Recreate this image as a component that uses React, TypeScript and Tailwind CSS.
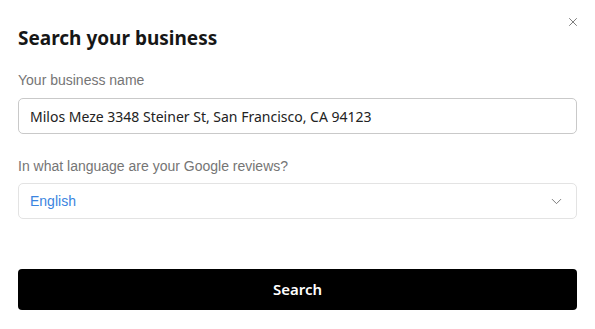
import { ChevronDown, X } from "lucide-react";

export default function App() {
  return (
    <div className="relative h-[329px] w-[595px] bg-white px-[18px] font-['Noto_Sans',sans-serif]">
      <button className="absolute right-[15px] top-[15px] text-[#555]" aria-label="Close">
        <X size={14} strokeWidth={1.3} />
      </button>
      <h1 className="pt-[24px] text-[19px] font-bold leading-[28px] text-[#161616]">Search your business</h1>
      <p className="mt-[20px] font-['Liberation_Sans',Arial,sans-serif] text-[14px] leading-[16px] text-[#757575]">
        Your business name
      </p>
      <div className="mt-[10px] flex h-[36px] items-center rounded-[5px] border border-[#c9c9c9] px-[11px] text-[14px] text-[#222]">
        Milos Meze 3348 Steiner St, San Francisco, CA 94123
      </div>
      <p className="mt-[24px] font-['Liberation_Sans',Arial,sans-serif] text-[14px] leading-[16px] text-[#757575]">
        In what language are your Google reviews?
      </p>
      <div className="mt-[9px] flex h-[36px] items-center justify-between rounded-[5px] border border-[#e3e3e3] pl-[11px] pr-[11px] font-['Liberation_Sans',Arial,sans-serif] text-[14px] text-[#3a84e0]">
        <span>English</span>
        <ChevronDown size={17} strokeWidth={1.2} className="text-[#666]" />
      </div>
      <button className="mt-[50px] flex h-[41px] w-full items-center justify-center rounded-[4px] bg-black text-[15px] font-semibold text-white">
        Search
      </button>
    </div>
  );
}
